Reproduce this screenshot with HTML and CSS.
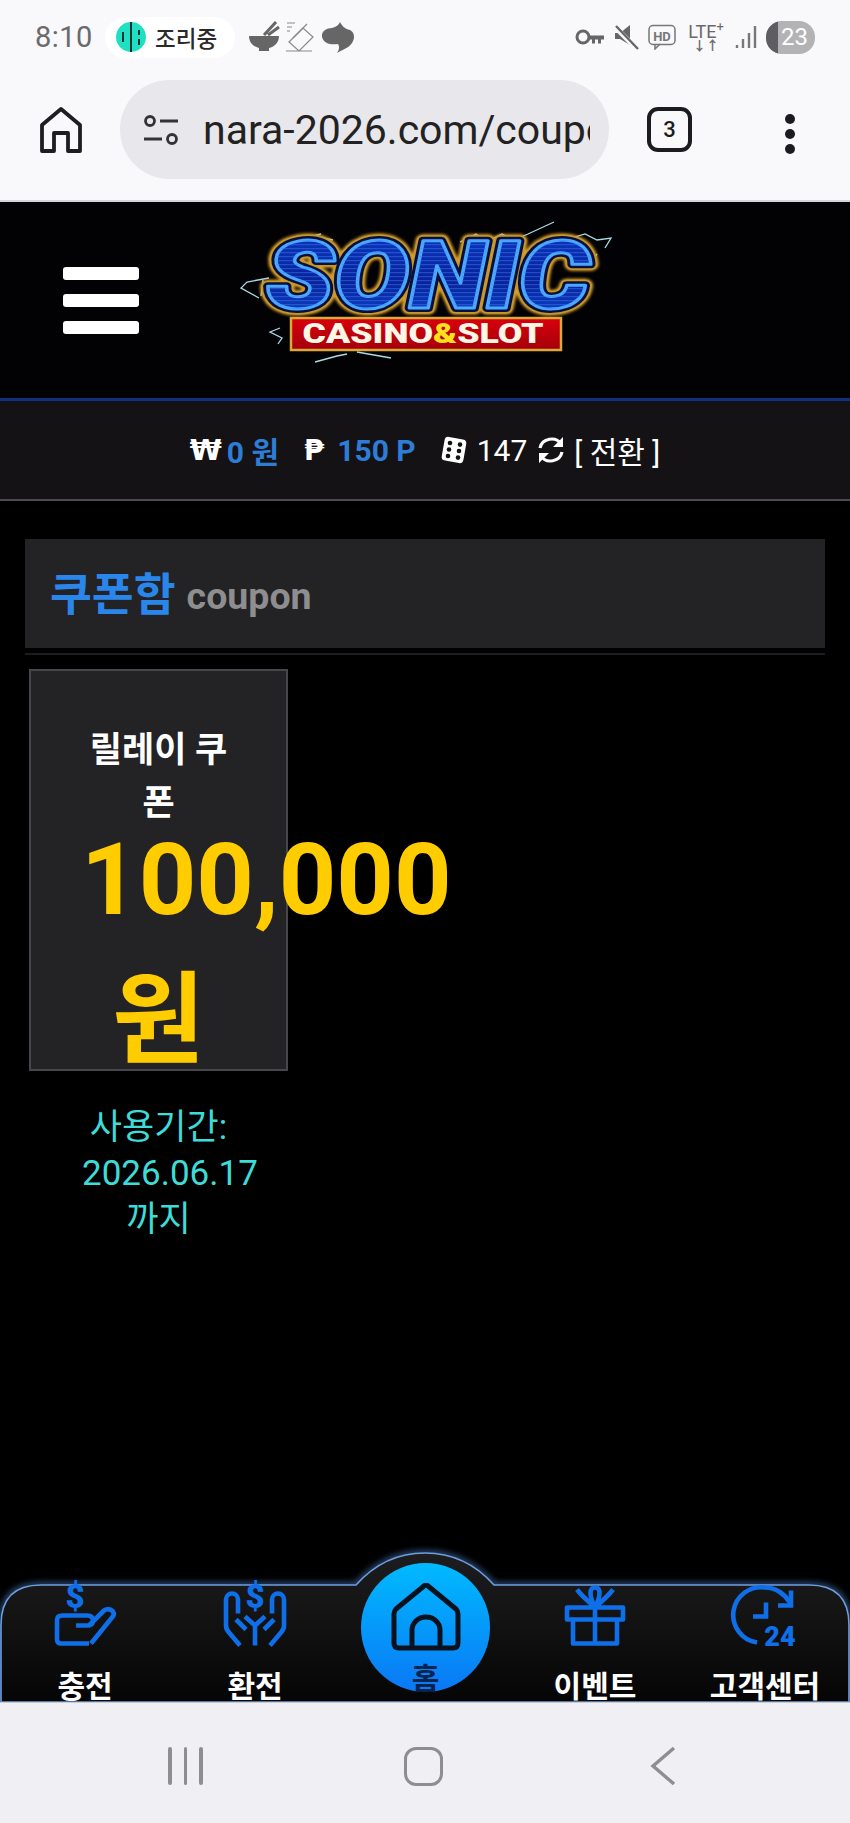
FILE: index.html
```html
<!DOCTYPE html>
<html lang="ko">
<head>
    <meta charset="UTF-8">
    <meta name="viewport" content="width=device-width, initial-scale=1.0">
    <title>쿠폰함</title>
    <link rel="stylesheet" href="styles.css">
</head>
<body>
    <div class="topbar">
        <div class="status">
            <span class="clock">8:10</span>
            <div class="pill">
                <svg class="pill-icon" viewBox="0 0 30 30"><circle cx="15" cy="15" r="15" fill="#20e0c4"/><path d="M7 10v10M15 0v30M23 8v5M23 17v6" stroke="#10312e" stroke-width="2" fill="none"/></svg>
                <span>조리중</span>
            </div>
            <svg class="st-left" viewBox="0 0 106 32">
                <path d="M0 15h30c0 7-5 11-10 12v3h-10v-3C5 26 0 22 0 15z" fill="#666"/>
                <path d="M15 14 27 1M19 14 30 6" stroke="#666" stroke-width="3" fill="none"/>
                <path d="M38 2h8M38 6h5M38 10h3M37 30h26M40 21 54 7l10 9-14 14z" stroke="#8a8a8a" stroke-width="1.2" fill="none"/>
                <path d="M44 17 58 3" stroke="#8a8a8a" stroke-width="1.2" fill="none"/>
                <path d="M91 1C93 5 96 8 101 9 105 11 106 16 104 20 102 26 95 28 88 32 90 29 91 26 89 23 82 24 75 23 73 16 72 10 78 7 83 7 87 6 90 4 91 1z" fill="#666"/>
            </svg>
            <div class="st-right">
                <svg class="st-key" viewBox="0 0 30 18"><circle cx="8" cy="9" r="6" fill="none" stroke="#666" stroke-width="3"/><path d="M14 7.5h15v4h-3v4h-3v-4h-3v4h-3v-4h-3z" fill="#666"/></svg>
                <svg class="st-mute" viewBox="0 0 26 26"><path d="M2 9h5l10-8v20L7 15H2z" fill="#666"/><path d="M2 3l22 22" stroke="#f9f8fb" stroke-width="5"/><path d="M3 2l22 23" stroke="#666" stroke-width="2.4"/></svg>
                <svg class="st-hd" viewBox="0 0 28 26"><rect x="1" y="1.5" width="26" height="19" rx="4" fill="none" stroke="#777" stroke-width="1.5"/><path d="M7 20v5l5-5" fill="none" stroke="#777" stroke-width="1.5"/><text x="14" y="16.5" text-anchor="middle" class="hd-text">HD</text></svg>
                <div class="lte"><span>LTE<sup>+</sup></span><i>↓↑</i></div>
                <svg class="st-signal" viewBox="0 0 22 24"><path d="M2 20v3M8 14v9M14 8v15M20 1v22" stroke="#777" stroke-width="2.4" fill="none"/></svg>
                <div class="battery"><span class="battery-fill"></span><b>23</b></div>
            </div>
        </div>
        <div class="browser">
            <svg class="br-home" viewBox="0 0 42 46"><path d="M2 44V18L21 2l19 16v26H28V26H14v18z" fill="none" stroke="#1e1e22" stroke-width="3.8" stroke-linejoin="round"/></svg>
            <div class="url">
                <svg class="url-tune" viewBox="0 0 38 30"><circle cx="8" cy="6" r="4.5" fill="none" stroke="#333" stroke-width="2.8"/><path d="M18 6h18M2 24h18" stroke="#333" stroke-width="2.8"/><circle cx="30" cy="24" r="4.5" fill="none" stroke="#333" stroke-width="2.8"/></svg>
                <span class="url-text">nara-2026.com/coupon</span>
            </div>
            <div class="tabs">3</div>
            <div class="dots"><span></span><span></span><span></span></div>
        </div>
    </div>

    <header class="header">
        <div class="burger"><span></span><span></span><span></span></div>
        <svg class="logo" viewBox="0 0 390 150">
            <defs>
                <linearGradient id="sonicFill" x1="0" y1="0" x2="0" y2="1">
                    <stop offset="0" stop-color="#0b3cc8"/>
                    <stop offset="0.55" stop-color="#08229a"/>
                    <stop offset="1" stop-color="#0f4fd8"/>
                </linearGradient>
                <linearGradient id="bannerFill" x1="0" y1="0" x2="0" y2="1">
                    <stop offset="0" stop-color="#d8000c"/>
                    <stop offset="1" stop-color="#a4000a"/>
                </linearGradient>
                <pattern id="stripes" width="4" height="4" patternUnits="userSpaceOnUse">
                    <rect y="0" width="4" height="1.2" fill="#3f7cf0" fill-opacity="0.45"/>
                </pattern>
                <filter id="boltBlur" x="-10%" y="-10%" width="120%" height="120%"><feGaussianBlur stdDeviation="0.7"/></filter>
                <filter id="goldGlow" x="-10%" y="-20%" width="120%" height="140%"><feGaussianBlur stdDeviation="1.6"/></filter>
                <text id="sonicWord" x="31" y="88" textLength="324" lengthAdjust="spacingAndGlyphs" class="logo-word">SONIC</text>
            </defs>
            <g fill="none" stroke="#a9dbe6" stroke-width="1.3" filter="url(#boltBlur)">
                <path d="M34 58 12 62l-6 6 18 10M28 60l-2 16M45 108l-10 4 12 6-4 6M98 20l-20-4 8-2M225 22l16-8 10 8 16-8 12 6 14-6 26-12M330 20l20-6 12 6 14-2-6 10M352 48l10-14M80 142l22-6 10-2M122 132l34 6"/>
            </g>
            <use href="#sonicWord" fill="none" stroke="#e0a52c" stroke-width="13" stroke-linejoin="round" filter="url(#goldGlow)"/>
            <use href="#sonicWord" fill="none" stroke="#c9962a" stroke-width="11" stroke-linejoin="round"/>
            <use href="#sonicWord" fill="none" stroke="#06103e" stroke-width="8" stroke-linejoin="round"/>
            <use href="#sonicWord" fill="url(#sonicFill)" stroke="#4aa8ff" stroke-width="3" stroke-linejoin="round"/>
            <use href="#sonicWord" fill="url(#stripes)"/>
            <rect x="56" y="98" width="270" height="32" fill="url(#bannerFill)" stroke="#d9a93a" stroke-width="2.5"/>
            <text x="188" y="123" text-anchor="middle" textLength="241" lengthAdjust="spacingAndGlyphs" class="logo-sub">CASINO<tspan fill="#ffe11a">&amp;</tspan>SLOT</text>
        </svg>
    </header>

    <div class="info">
        <span class="sym">₩</span>
        <b class="money m-won">0 원</b>
        <span class="sym">₱</span>
        <b class="money m-point">150 P</b>
        <svg class="dice" viewBox="0 0 28 28"><rect x="3" y="2" width="22" height="24" rx="4" fill="#fff" transform="rotate(10 14 14)"/><g fill="#111"><circle cx="10" cy="7" r="2.3"/><circle cx="20" cy="8.6" r="2.3"/><circle cx="9" cy="13.5" r="2.3"/><circle cx="19" cy="15" r="2.3"/><circle cx="8" cy="20" r="2.3"/><circle cx="18" cy="21.6" r="2.3"/></g></svg>
        <span class="num">147</span>
        <svg class="refresh" viewBox="0 0 28 28"><path d="M3 12C5 2 19 0 24 8M25 16C23 26 9 28 4 20" fill="none" stroke="#fff" stroke-width="3.2"/><path d="M26 1v10H16zM2 27V17h10z" fill="#fff"/></svg>
        <span class="switch">[ 전환 ]</span>
    </div>

    <main class="content">
        <div class="title-bar">
            <h1>쿠폰함</h1>
            <span>coupon</span>
        </div>
        <div class="title-line"></div>
        <div class="coupon">
            <div class="coupon-card">
                <div class="coupon-name">릴레이 쿠폰</div>
                <div class="coupon-amount">100,000 원</div>
            </div>
            <div class="coupon-date">사용기간: 2026.06.17 까지</div>
        </div>
    </main>

    <nav class="nav">
        <svg class="nav-bg" viewBox="0 0 850 152">
            <defs>
                <linearGradient id="navFill" x1="0" y1="0" x2="0" y2="1">
                    <stop offset="0" stop-color="#1d1c1f"/>
                    <stop offset="0.35" stop-color="#151516"/>
                    <stop offset="1" stop-color="#050506"/>
                </linearGradient>
                <filter id="navGlow" x="-5%" y="-20%" width="110%" height="140%"><feGaussianBlur stdDeviation="3"/></filter>
            </defs>
            <path d="M1 152V75Q1 35 41 35H356C372 17 395 3 425 3S478 17 494 35H809Q849 35 849 75V152" fill="none" stroke="#3f6aa8" stroke-width="4" filter="url(#navGlow)"/>
            <path d="M1 152V75Q1 35 41 35H356C372 17 395 3 425 3S478 17 494 35H809Q849 35 849 75V152Z" fill="url(#navFill)" stroke="#6d9ede" stroke-width="1.6"/>
        </svg>
        <a class="nav-item">
            <svg class="nav-icon" viewBox="0 0 60 60"><text x="20" y="22" class="icon-dollar" text-anchor="middle">$</text><path d="M34 58H6Q2 58 2 54V35Q2 30 7 30H32Q38 30 38 35T32 40H21M33 41 49 25Q54 22 58 26 60 29 57 32L36 58" fill="none" stroke="#0f6fe8" stroke-width="4.6" stroke-linejoin="round"/></svg>
            <span>충전</span>
        </a>
        <a class="nav-item">
            <svg class="nav-icon" viewBox="0 0 60 60"><text x="30" y="22" class="icon-dollar" text-anchor="middle">$</text><path d="M15 60 4 47Q1 44 1 40V14A6 6 0 0 1 13 14V28M45 60 56 47Q59 44 59 40V14A6 6 0 0 0 47 14V28M21 44 11 34M39 44 49 34M30 60V40L20 31M30 40 40 31" fill="none" stroke="#0f6fe8" stroke-width="4.6" stroke-linejoin="round"/></svg>
            <span>환전</span>
        </a>
        <a class="nav-item nav-home">
            <div class="home-circle">
                <svg class="home-icon" viewBox="0 0 70 68"><path d="M21 65H8Q3 65 3 60V31Q3 28 5 26L33 3Q35 1 37 3L65 26Q67 28 67 31V60Q67 65 62 65ZM21 65V47A14 13 0 0 1 49 47V65" fill="none" stroke="#08121f" stroke-width="5" stroke-linejoin="round"/></svg>
                <span>홈</span>
            </div>
        </a>
        <a class="nav-item">
            <svg class="nav-icon" viewBox="0 0 60 60"><path d="M2 22H58V34H2zM8 34V58H52V34M30 22V58M30 22C24 16 18 12 12 4M30 22C36 16 42 12 48 4M30 22C24 10 24 2 30 2S36 10 30 22" fill="none" stroke="#0f6fe8" stroke-width="4.6" stroke-linejoin="round"/></svg>
            <span>이벤트</span>
        </a>
        <a class="nav-item">
            <svg class="nav-icon" viewBox="0 0 60 60"><path d="M22 57A27 27 0 0 1 30 2C41 2 50 9 55 17" fill="none" stroke="#0f6fe8" stroke-width="4.6"/><path d="M56 5V20H43M31 17V31H18" fill="none" stroke="#0f6fe8" stroke-width="4.6"/><text x="45" y="60" class="icon-24" text-anchor="middle">24</text></svg>
            <span>고객센터</span>
        </a>
    </nav>

    <div class="sysbar">
        <div class="sys-recent"><span></span><span></span><span></span></div>
        <div class="sys-home"></div>
        <svg class="sys-back" viewBox="0 0 26 40"><path d="M24 2 3 20l21 18" fill="none" stroke="#8e8e92" stroke-width="3.4"/></svg>
    </div>
</body>
</html>
```

FILE: styles.css
```css
* { box-sizing: border-box; }
html, body { margin: 0; padding: 0; }
body { width: 850px; height: 1823px; display: flex; flex-direction: column; overflow: hidden; background: #000; font-family: Roboto, "Noto Sans CJK KR", sans-serif; }

/* phone status bar + browser */
.topbar { height: 202px; flex: none; background: #f9f8fb; border-bottom: 2px solid #d6d5d9; }
.status { height: 74px; display: flex; align-items: center; padding: 0 35px 0 35px; }
.clock { font-size: 29px; color: #6a6a6a; width: 70px; letter-spacing: 0.5px; }
.pill { width: 130px; height: 41px; background: #fff; border-radius: 21px; display: flex; align-items: center; gap: 9px; padding-left: 11px; font-size: 22.5px; font-weight: 500; color: #2a2a2a; white-space: nowrap; }
.pill-icon { width: 30px; height: 30px; flex: none; }
.st-left { width: 106px; height: 32px; margin-left: 14px; }
.st-right { margin-left: auto; display: flex; align-items: center; }
.st-key { width: 30px; height: 18px; }
.st-mute { width: 26px; height: 26px; margin-left: 8px; }
.st-hd { width: 28px; height: 26px; margin-left: 9px; }
.hd-text { font-size: 13px; font-weight: 700; fill: #777; }
.lte { width: 42px; margin-left: 9px; font-size: 18px; line-height: 16px; color: #6a6a6a; text-align: center; white-space: nowrap; }
.lte span, .lte i { display: block; }
.lte sup { font-size: 13px; line-height: 0; }
.lte i { font-style: normal; font-size: 13px; line-height: 11px; font-weight: 700; }
.st-signal { width: 22px; height: 24px; margin-left: 8px; }
.battery { width: 49px; height: 33px; margin-left: 9px; background: #b3b3b5; border-radius: 16px; position: relative; overflow: hidden; text-align: center; }
.battery-fill { position: absolute; left: 0; top: 0; bottom: 0; width: 12px; background: #5e5e60; }
.battery b { position: relative; font-size: 24px; line-height: 33px; font-weight: 400; color: #fff; padding-left: 8px; }

.browser { height: 126px; display: flex; align-items: flex-start; padding-top: 6px; }
.br-home { width: 42px; height: 46px; margin: 27px 0 0 40px; }
.url { width: 489px; height: 99px; margin-left: 38px; background: #e8e7eb; border-radius: 50px; display: flex; align-items: center; padding-left: 22px; }
.url-tune { width: 38px; height: 30px; flex: none; }
.url-text { width: 387px; margin-left: 23px; overflow: hidden; white-space: nowrap; font-size: 41px; color: #222; }
.tabs { width: 45px; height: 45px; margin: 27px 0 0 38px; border: 4px solid #1c1c20; border-radius: 11px; font-size: 22px; font-weight: 500; color: #1c1c20; text-align: center; line-height: 37px; }
.dots { margin: 34px 0 0 93px; display: flex; flex-direction: column; gap: 5px; }
.dots span { width: 10px; height: 10px; border-radius: 50%; background: #1c1c20; }

/* site header */
.header { height: 199px; flex: none; background: #020103; border-bottom: 3px solid #13307e; display: flex; align-items: flex-start; }
.burger { width: 76px; margin: 65px 0 0 63px; display: flex; flex-direction: column; gap: 14px; }
.burger span { height: 13px; background: #fff; border-radius: 3px; }
.logo { width: 390px; height: 150px; margin: 18px 0 0 96px; }
.logo-word { font-family: Roboto, sans-serif; font-size: 94px; font-weight: 900; font-style: italic; }
.logo-sub { font-family: Roboto, sans-serif; font-size: 28px; font-weight: 900; fill: #fff6e6; }

/* balance row */
.info { height: 100px; flex: none; background: #141214; border-bottom: 2px solid #4b494d; display: flex; align-items: center; justify-content: center; color: #fff; font-size: 30px; }
.sym { font-family: "DejaVu Sans", sans-serif; font-weight: 700; font-size: 29px; color: #fff; }
.money { color: #2d7dd8; font-weight: 700; margin-left: 5px; }
.m-won { margin-right: 25px; }
.m-point { margin-left: 13px; margin-right: 24px; }
.dice { width: 28px; height: 28px; }
.num { margin-left: 9px; }
.refresh { width: 28px; height: 28px; margin-left: 10px; }
.switch { margin-left: 9px; }

/* coupon list */
.content { flex: 1; min-height: 0; padding: 38px 25px 0; background: #000; }
.title-bar { height: 109px; background: #232224; display: flex; align-items: center; padding: 4px 0 0 25px; gap: 11px; }
.title-bar h1 { margin: 0; font-size: 45.5px; font-weight: 700; color: #2a86ea; line-height: 1; }
.title-bar span { font-size: 37.5px; font-weight: 700; color: #8e8d90; }
.title-line { height: 2px; margin-top: 5px; background: #1e1c20; }
.coupon { width: 259px; margin: 14px 0 0 4px; text-align: center; }
.coupon-card { height: 402px; padding: 53px 50px 0; background: #232224; border: 2px solid #47464a; }
.coupon-name { font-size: 35px; font-weight: 700; line-height: 53px; color: #fff; }
.coupon-amount { margin-top: -20px; font-size: 100.5px; font-weight: 700; line-height: 141px; color: #ffcc00; }
.coupon-date { padding: 34px 53px 0; font-size: 35px; line-height: 46px; color: #3cdcd8; }

/* bottom nav */
.nav { height: 117px; flex: none; position: relative; display: grid; grid-template-columns: repeat(5, 170px); text-align: center; }
.nav-bg { position: absolute; left: 0; bottom: 0; width: 850px; height: 152px; overflow: visible; }
.nav-item { position: relative; display: flex; flex-direction: column; align-items: center; color: #fff; font-size: 30px; font-weight: 700; }
.nav-icon { width: 60px; height: 61px; overflow: visible; }
.nav-item > span { margin-top: 20px; line-height: 42px; white-space: nowrap; }
.icon-dollar { font-size: 33px; font-weight: 900; fill: #0f6fe8; }
.icon-24 { font-size: 27px; font-weight: 900; fill: #0f6fe8; }
.home-circle { position: absolute; left: 21px; top: -22px; width: 129px; height: 129px; border-radius: 50%; background: linear-gradient(180deg, #00baff, #0a78f5); display: flex; flex-direction: column; align-items: center; color: #06224f; font-size: 30px; }
.home-icon { width: 70px; height: 68px; margin-top: 20px; flex: none; }
.home-circle span { margin-top: 10px; line-height: 36px; }

/* android nav */
.sysbar { height: 121px; flex: none; position: relative; background: #f0eff3; border-top: 1px solid #c9c9cf; }
.sys-recent { position: absolute; left: 168px; top: 44px; display: flex; gap: 12px; }
.sys-recent span { width: 3.5px; height: 38px; background: #8e8e92; border-radius: 2px; }
.sys-home { position: absolute; left: 404px; top: 44px; width: 39px; height: 39px; border: 3.5px solid #8e8e92; border-radius: 12px; }
.sys-back { position: absolute; left: 650px; top: 43px; width: 26px; height: 40px; }
```
